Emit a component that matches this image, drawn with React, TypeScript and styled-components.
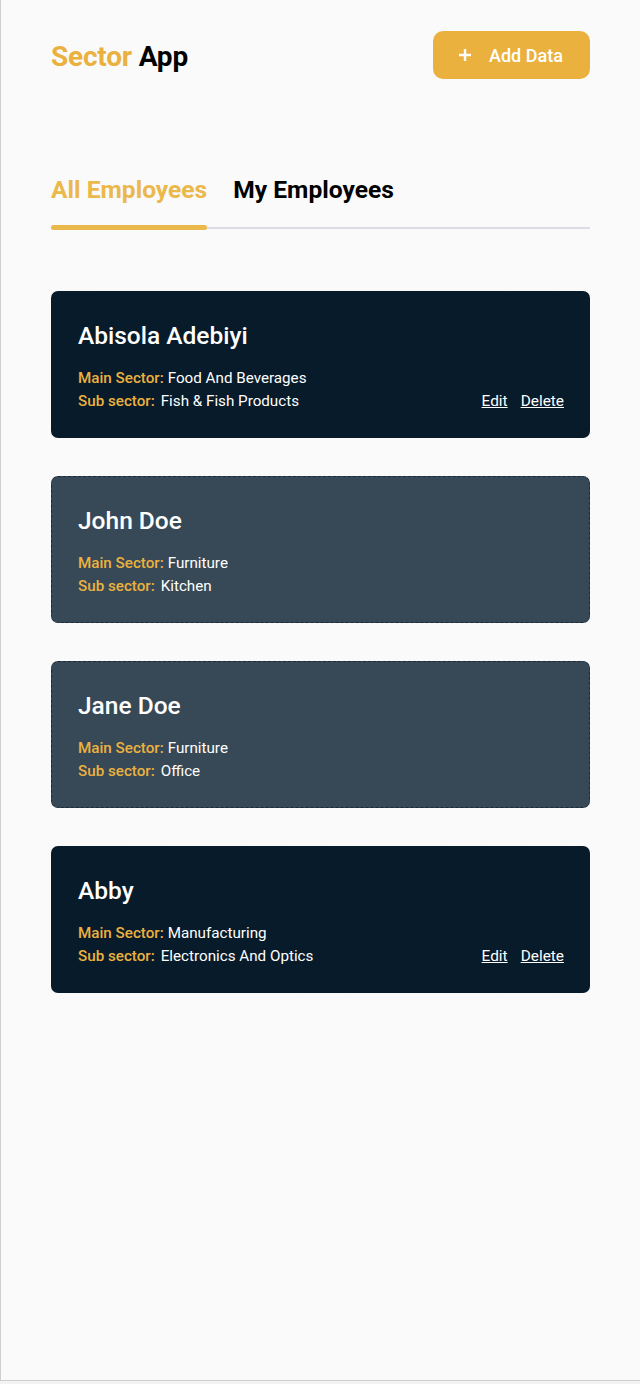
import React from "react";
import styled, { createGlobalStyle } from "styled-components";

const Global = createGlobalStyle`
  html, body { margin: 0; padding: 0; background: #f3f3f3; }
  body { font-family: Roboto, "Liberation Sans", Arial, sans-serif; }
  * { box-sizing: border-box; }
`;

const Page = styled.div`
  width: 640px;
  height: 1381px;
  background: #fafafa;
  border-left: 1px solid #cfcfcf;
  border-bottom: 1px solid #cfcfcf;
  padding: 31px 50px 0 50px;
`;

const Header = styled.header`
  display: flex;
  align-items: center;
  justify-content: space-between;
  height: 48px;
`;

const Logo = styled.h1`
  margin: 0;
  padding-top: 2px;
  font-size: 28px;
  font-weight: 700;
  color: #000;
  letter-spacing: -0.2px;
  span { color: #ebb13f; }
`;

const AddButton = styled.button`
  display: flex;
  align-items: center;
  gap: 17px;
  height: 48px;
  width: 157px;
  padding: 0 0 0 25px;
  border: none;
  border-radius: 10px;
  background: #ebb13f;
  color: #fff;
  font-family: inherit;
  font-size: 18px;
  font-weight: 500;
`;

const Tabs = styled.nav`
  display: flex;
  gap: 26px;
  margin-top: 96px;
  padding-bottom: 22px;
  border-bottom: 2px solid #dcdde2;
`;

const Tab = styled.div<{ $active?: boolean }>`
  position: relative;
  font-size: 24.6px;
  font-weight: 700;
  line-height: 30px;
  color: ${(p) => (p.$active ? "#ebb84c" : "#000")};
  &::after {
    content: "";
    display: ${(p) => (p.$active ? "block" : "none")};
    position: absolute;
    left: 0;
    right: 0;
    bottom: -25px;
    height: 5px;
    border-radius: 3px;
    background: #ebb84c;
  }
`;

const List = styled.div`
  display: flex;
  flex-direction: column;
  gap: 38px;
  margin-top: 62px;
`;

const Card = styled.div<{ $mine?: boolean }>`
  height: 147px;
  border-radius: 7px;
  padding: 29px 25px 0 26px;
  background: ${(p) => (p.$mine ? "#081b2a" : "#374956")};
  border: 1px dashed ${(p) => (p.$mine ? "#081b2a" : "#1c2a38")};
  color: #fff;
`;

const Name = styled.h2`
  margin: 0 0 16px;
  font-size: 24.5px;
  font-weight: 500;
  line-height: 30px;
`;

const InfoRow = styled.div`
  display: flex;
  align-items: center;
  font-size: 15.2px;
  line-height: 23px;
`;

const Label = styled.span<{ $gap: number }>`
  color: #ebb13f;
  font-weight: 500;
  margin-right: ${(p) => p.$gap}px;
`;

const Value = styled.span`
  color: #fff;
`;

const Actions = styled.div`
  margin-left: auto;
  display: flex;
  gap: 13px;
`;

const ActionLink = styled.a`
  color: #fff;
  text-decoration: underline;
  font-size: 15.4px;
  cursor: pointer;
`;

const employees = [
  { name: "Abisola Adebiyi", main: "Food And Beverages", sub: "Fish & Fish Products", mine: true },
  { name: "John Doe", main: "Furniture", sub: "Kitchen", mine: false },
  { name: "Jane Doe", main: "Furniture", sub: "Office", mine: false },
  { name: "Abby", main: "Manufacturing", sub: "Electronics And Optics", mine: true },
];

export default function App() {
  return (
    <>
      <Global />
      <Page>
        <Header>
          <Logo>
            <span>Sector</span> App
          </Logo>
          <AddButton>
            <svg width="14" height="14" viewBox="0 0 14 14">
              <path d="M7 1v12M1 7h12" stroke="#fff" strokeWidth="2.4" strokeLinecap="butt" />
            </svg>
            Add Data
          </AddButton>
        </Header>
        <Tabs>
          <Tab $active>All Employees</Tab>
          <Tab>My Employees</Tab>
        </Tabs>
        <List>
          {employees.map((e) => (
            <Card key={e.name} $mine={e.mine}>
              <Name>{e.name}</Name>
              <InfoRow>
                <Label $gap={4}>Main Sector:</Label>
                <Value>{e.main}</Value>
              </InfoRow>
              <InfoRow>
                <Label $gap={6}>Sub sector:</Label>
                <Value>{e.sub}</Value>
                {e.mine && (
                  <Actions>
                    <ActionLink>Edit</ActionLink>
                    <ActionLink>Delete</ActionLink>
                  </Actions>
                )}
              </InfoRow>
            </Card>
          ))}
        </List>
      </Page>
    </>
  );
}
